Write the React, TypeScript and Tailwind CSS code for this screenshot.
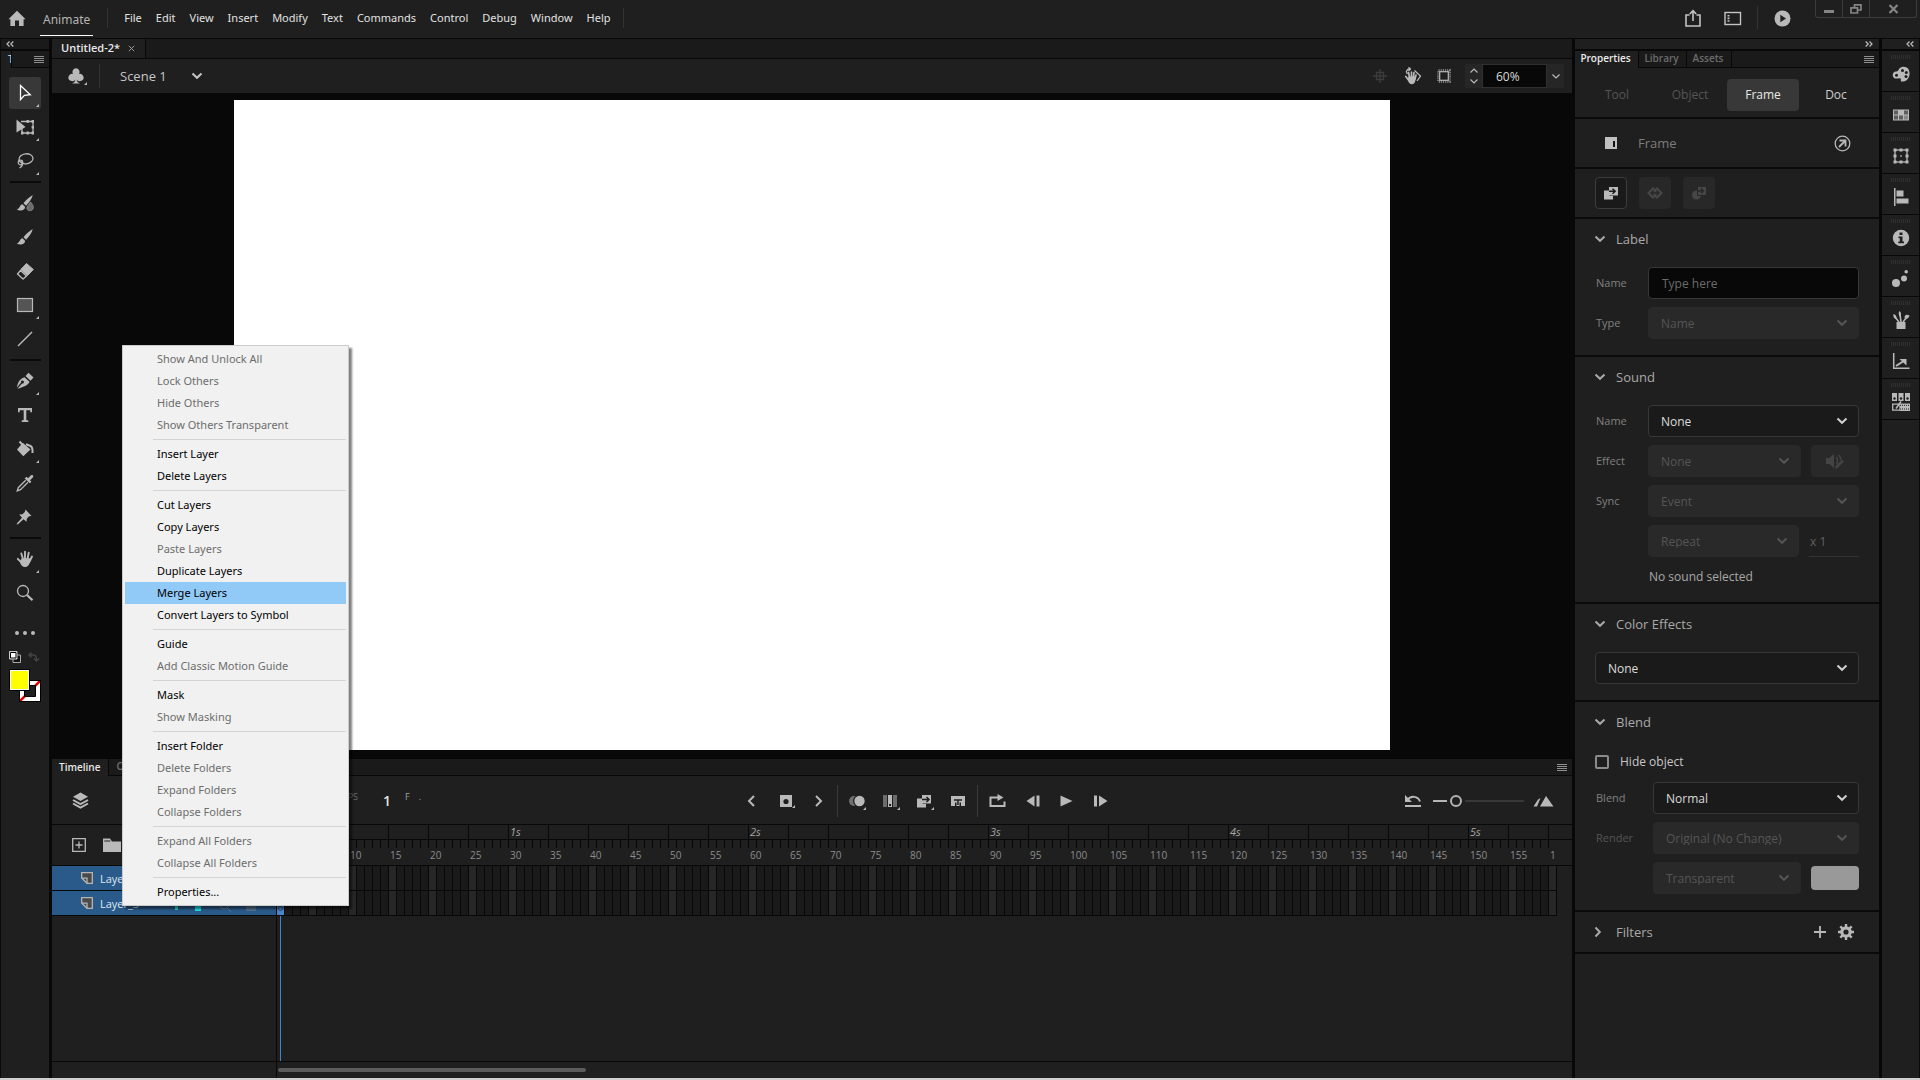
import React from "react";

const INK = "#b9b9b9";

type IconProps = { children: React.ReactNode; size?: number; w?: number; h?: number; className?: string };

function Icon({ children, size = 18, w, h, className = "" }: IconProps) {
  const width = w ?? size;
  const height = h ?? size;
  return (
    <svg width={width} height={height} viewBox={`0 0 ${width} ${height}`} fill="none" className={`shrink-0 ${className}`} aria-hidden="true">
      {children}
    </svg>
  );
}

function Corner() {
  return <span className="absolute right-[2px] bottom-[2px] size-[3px] bg-[#b9b9b9] [clip-path:polygon(100%_0,100%_100%,0_100%)]" />;
}

function ChevronDown({ className = "" }: { className?: string }) {
  return (
    <Icon w={12} h={8} className={className}>
      <path d="M1.500 1.500L6 5.800L10.500 1.500" stroke="currentColor" strokeWidth="2" />
    </Icon>
  );
}

function Burger() {
  return (
    <Icon w={10} h={9}>
      <path d="M0 1.500h10M0 3.500h10M0 5.500h10M0 7.500h10" stroke="#8f8f8f" />
    </Icon>
  );
}

function DoubleArrow({ right = false }: { right?: boolean }) {
  return (
    <Icon w={8} h={6} className={right ? "rotate-180" : ""}>
      <path d="M3.500 .5L1 3l2.500 2.500M7.300 .5L4.800 3l2.500 2.500" stroke="#c0c0c0" strokeWidth="1.200" />
    </Icon>
  );
}

/* ---------- top bar ---------- */

const menus = ["File", "Edit", "View", "Insert", "Modify", "Text", "Commands", "Control", "Debug", "Window", "Help"];

function TopBar() {
  return (
    <header className="flex h-[38px] shrink-0 items-start bg-[#1f1f1f]">
      <button aria-label="Home" className="mt-[10px] ml-2">
        <Icon w={18} h={17}>
          <path d="M9 .8L17.600 9.200H15.600V16H11V10.500H7V16H2.400V9.200H.4z" fill={INK} />
        </Icon>
      </button>
      <button className="mt-2 ml-[14px] h-7 border-b border-white px-[3px] pb-1 font-['Noto_Sans'] text-[12px] text-[#b4b4b4]">Animate</button>
      <span className="mt-2 ml-[14px] h-5 w-px bg-[#333]" />
      <nav className="mt-[7px] ml-4 flex h-5 items-center gap-[14px] font-['Noto_Sans']">
        {menus.map((m) => (
          <button key={m} className="text-[11px] text-[#e2e2e2]">{m}</button>
        ))}
      </nav>
      <span className="mt-2 ml-3 h-5 w-px bg-[#333]" />
      <div className="ml-auto flex items-start">
        <button aria-label="Share" className="mt-[9px]">
          <Icon w={18} h={18}>
            <path d="M5.500 6H2v11h14V6h-3.500M9 12V2M5.800 5L9 1.700L12.200 5" stroke="#c4c4c4" strokeWidth="1.600" />
          </Icon>
        </button>
        <button aria-label="Workspaces" className="mt-[11px] ml-[22px]">
          <Icon w={18} h={15}>
            <rect x="1" y="1.500" width="15.500" height="12" stroke="#c4c4c4" strokeWidth="1.400" />
            <path d="M4.500 4v7" stroke="#c4c4c4" strokeWidth="2" strokeDasharray="1.600 1" />
          </Icon>
        </button>
        <span className="mt-[6px] ml-[15px] h-[23px] w-px bg-[#333]" />
        <button aria-label="Test movie" className="mt-[10px] ml-4">
          <Icon w={17} h={17}>
            <circle cx="8.500" cy="8.500" r="8" fill={INK} />
            <path d="M6.300 4.800L12 8.500L6.300 12.200z" fill="#1f1f1f" />
          </Icon>
        </button>
        <div className="mr-[3px] ml-6 flex h-[18px] divide-x divide-[#3c3c3c] rounded-b-[3px] border-x border-b border-[#3c3c3c]">
          <button aria-label="Minimize" className="flex w-[27px] items-center justify-center pt-[6px]"><span className="h-[3px] w-[10px] bg-[#858585]" /></button>
          <button aria-label="Restore" className="flex w-[27px] items-center justify-center">
            <Icon w={12} h={10}><path d="M4.500 3V.8H11V6H8M1 3.800h6.500V9H1z" stroke="#858585" strokeWidth="1.700" /></Icon>
          </button>
          <button aria-label="Close" className="flex w-[46px] items-center justify-center">
            <Icon w={11} h={10}><path d="M1.500 1L9.500 9M9.500 1L1.500 9" stroke="#858585" strokeWidth="2.200" /></Icon>
          </button>
        </div>
      </div>
    </header>
  );
}

/* ---------- tool column ---------- */

const brush = (
  <>
    <path d="M16.800 1C13.500 3 9.500 6.500 7.500 9.200L10 11.700C12.600 9.300 15.800 5 16.800 1z" fill={INK} />
    <path d="M6.500 10.200C4.200 10.200 4.200 13.800 .8 15.800C4.500 17.500 9.300 16.300 9 12.700z" fill={INK} />
  </>
);

type Tool = { name: string; corner?: boolean; active?: boolean; art: React.ReactNode };

const toolGroups: Tool[][] = [
  [
    { name: "Selection", corner: true, active: true, art: <path d="M4.500 1.500V15.500L8.500 11.300L14.300 10.700z" stroke="#fff" strokeWidth="1.300" strokeLinejoin="miter" /> },
    {
      name: "Free transform",
      corner: true,
      art: (
        <>
          <path d="M5 3.500H17V15H6V9" stroke={INK} strokeWidth="1.300" />
          <path d="M.5 1.500L9.500 9L.5 14.500z" fill={INK} />
          <path d="M10.500 2h2.400v2.800h-2.400zM15.600 2h2.400v2.800h-2.400zM15.600 8h2.400v2.500h-2.400zM15.600 13.600h2.400v2.800h-2.400zM10.500 13.600h2.400v2.800h-2.400zM5 13.600h2.400v2.800H5z" fill={INK} />
        </>
      ),
    },
    {
      name: "Lasso",
      corner: true,
      art: (
        <>
          <ellipse cx="10" cy="6.800" rx="7" ry="5" stroke={INK} strokeWidth="1.300" transform="rotate(-6 10 6.800)" />
          <circle cx="4.500" cy="10.500" r="2.300" stroke={INK} strokeWidth="1.200" />
          <path d="M5 9.500C7.500 11.500 7 14 3.500 16" stroke={INK} strokeWidth="1.200" />
        </>
      ),
    },
  ],
  [
    { name: "Fluid brush", art: <>{brush}<path d="M14.500 8C17 11 18 12.500 17 15C16 17.300 11.500 17.300 10.800 14.500C10.600 12.500 12.500 11 14.500 8z" fill="#6b6b6b" stroke="#8c8c8c" strokeWidth=".8" /></> },
    { name: "Classic brush", art: brush },
    {
      name: "Eraser",
      art: (
        <>
          <path d="M10.500 1.500L17.300 7.500L11.500 13.500L4.800 7.500z" fill={INK} stroke={INK} strokeLinejoin="round" />
          <path d="M4.500 8.500L10.500 14L7 17L1.500 12z" stroke={INK} strokeWidth="1.400" strokeLinejoin="round" />
        </>
      ),
    },
    { name: "Rectangle", corner: true, art: <rect x="1.500" y="2.500" width="15" height="13" fill="#555" stroke={INK} strokeWidth="1.200" /> },
    { name: "Line", art: <path d="M2 16L16 2" stroke={INK} strokeWidth="1.500" /> },
  ],
  [
    {
      name: "Pen",
      corner: true,
      art: (
        <>
          <path d="M8.500 5.200L13.500 9.800C12.500 12.500 9.500 14.500 1.500 16.800L6 11.500A1.500 1.500 0 1 0 5 10.500L.8 15.800C2 9 4.500 6.500 8.500 5.200z" fill={INK} />
          <path d="M9.500 4L12.500 .8L17.500 5.500L14.500 8.800z" fill={INK} />
        </>
      ),
    },
    { name: "Text", art: <path d="M2 2H16V6.200H14.300V4.200H10.300V14.300H12.300V16H5.700V14.300H7.700V4.200H3.700V6.200H2z" fill={INK} /> },
    {
      name: "Paint bucket",
      corner: true,
      art: (
        <>
          <path d="M6.800 2.800L14.500 9.500L7.300 16.200L1 9.500z" fill={INK} />
          <path d="M3.500 1.500L8.500 7M10 4.200L14.500 6C16.500 7 16.800 9 16.500 13" stroke={INK} strokeWidth="2" />
        </>
      ),
    },
    {
      name: "Eyedropper",
      art: (
        <>
          <path d="M10.500 2.800L12 4.200L14.800 1.400C17 .3 18 2 16.800 3.500L14 6.300L15.400 7.800L13.800 9.300L8.700 4.400z" fill={INK} />
          <path d="M9.700 6.200L2.300 13.700L1.200 16.900L4.500 15.700L12 8.200" stroke={INK} strokeWidth="1.300" />
        </>
      ),
    },
    { name: "Asset warp", art: <path d="M9.500 1.500L15.500 8L13 8.300L10.800 10.800L10.500 13.800L7.500 11.200L2 16.300L.8 16.500L1 15.200L6 9.800L3.200 6.500L6.500 6.300L8.800 4z" fill={INK} /> },
  ],
  [
    {
      name: "Hand",
      corner: true,
      art: (
        <>
          <path d="M5.300 3.500L7 9M9 1.800V8.500M12.700 2.800L11.500 9M16 6.500L13.500 11.500M1.800 8.800L5.500 12.500" stroke={INK} strokeWidth="1.900" strokeLinecap="round" />
          <path d="M5.500 8.500L13.500 8L14.500 10.500C13.500 14.500 12 17 9 17C6.500 17 5 15.500 3.800 12z" fill={INK} />
        </>
      ),
    },
    {
      name: "Zoom",
      art: (
        <>
          <circle cx="7" cy="7" r="5.500" stroke={INK} strokeWidth="1.300" />
          <path d="M11 11L16.500 16.300" stroke={INK} strokeWidth="2.200" />
        </>
      ),
    },
  ],
];

function ToolColumn() {
  return (
    <aside className="flex w-[49px] shrink-0 flex-col border-l border-[#0c0c0c] bg-[#1f1f1f]">
      <div className="flex h-[10px] shrink-0 items-center bg-[#1a1a1a] pl-[5px]"><DoubleArrow /></div>
      <div className="flex h-[19px] shrink-0 border-t-2 border-[#080808]">
        <span className="w-[10px] overflow-hidden pl-[7px] text-[10px] leading-4 text-[#dbe7ff]">T</span>
        <span className="flex flex-1 items-center justify-end border-b border-l border-[#080808] bg-[#1a1a1a] pr-[5px]"><Burger /></span>
      </div>
      <div className="mt-[9px] flex flex-col items-center gap-[2px]">
        {toolGroups.map((group, i) => (
          <React.Fragment key={i}>
            {i > 0 && <div className="flex h-[6px] w-[31px] items-center"><span className="h-[2px] w-full bg-[#0a0a0a]" /></div>}
            {group.map((t) => (
              <button key={t.name} aria-label={t.name} className={`relative flex size-8 items-center justify-center rounded-[3px] ${t.active ? "bg-[#383838]" : ""}`}>
                <Icon>{t.art}</Icon>
                {t.corner && <Corner />}
              </button>
            ))}
          </React.Fragment>
        ))}
      </div>
      <button aria-label="Edit toolbar" className="mt-[22px] flex justify-center gap-[4px]">
        <span className="size-[4px] rounded-full bg-[#b9b9b9]" />
        <span className="size-[4px] rounded-full bg-[#b9b9b9]" />
        <span className="size-[4px] rounded-full bg-[#b9b9b9]" />
      </button>
      <div className="mt-4 flex h-3 items-start justify-between pr-[9px] pl-2">
        <Icon size={12}>
          <path d="M4 4h7.500v7.500H4z" fill="#111" stroke="#aaa" />
          <path d="M.5 .5h7.500v7.500H.5z" fill="#fff" stroke="#ccc" />
          <path d="M1.500 1.500h5.500v5.500H1.500z" fill="#fff" stroke="#000" />
        </Icon>
        <Icon size={12}><path d="M1 4H5.500C8 4 8.500 5.500 8.500 8.500M3.500 1.500L1 4l2.500 2.500M6 7.500L8.500 10l2.500-2.500" stroke="#444" strokeWidth="1.500" /></Icon>
      </div>
      <div className="mt-[6px] ml-2 grid w-8 grid-cols-[10px_11px_11px] grid-rows-[11px_11px_11px]">
        <button aria-label="Stroke color" className="col-start-2 col-end-4 row-start-2 row-end-4 border border-black">
          <svg viewBox="0 0 20 20" className="block size-5" aria-hidden="true">
            <path d="M0 0H20V20H0z" fill="#fff" />
            <path d="M0 20L20 0" stroke="#e00000" strokeWidth="2.500" />
            <path d="M4.500 4.500h11v11h-11z" fill="#1f1f1f" stroke="#000" />
          </svg>
        </button>
        <button aria-label="Fill color" className="z-10 col-start-1 col-end-3 row-start-1 row-end-3 border border-black bg-[#ffff00] outline outline-1 -outline-offset-2 outline-white" />
      </div>
    </aside>
  );
}

/* ---------- document ---------- */

function DocumentArea() {
  return (
    <section className="flex min-h-0 flex-1 flex-col">
      <div className="flex h-5 shrink-0 items-stretch border-b border-[#080808] bg-[#1a1a1a]">
        <div className="flex items-center gap-2 border-r border-[#080808] bg-[#1f1f1f] pr-[10px] pl-[9px]">
          <span className="pb-[2px] text-[11px] font-semibold text-[#e8e8e8]">Untitled-2*</span>
          <button aria-label="Close tab"><Icon w={7} h={7}><path d="M.8 .8L6.200 6.200M6.200 .8L.8 6.200" stroke="#999" /></Icon></button>
        </div>
      </div>
      <div className="flex h-[34px] shrink-0 items-center bg-[#1f1f1f]">
        <button aria-label="Edit symbols" className="relative ml-[15px] pr-[2px]">
          <Icon w={18} h={18}>
            <path d="M9 1.300a3.600 3.600 0 0 1 3 5.600a3.700 3.700 0 1 1-2.300 5.500c.200 2 1 3.200 3.300 4.100H5c2.300-.9 3.100-2.100 3.300-4.100A3.700 3.700 0 1 1 6 6.900A3.600 3.600 0 0 1 9 1.300z" fill={INK} />
          </Icon>
          <span className="absolute right-0 bottom-0 size-[3px] bg-[#b9b9b9] [clip-path:polygon(100%_0,100%_100%,0_100%)]" />
        </button>
        <span className="ml-[12px] h-6 w-px bg-[#333]" />
        <button className="ml-5 flex items-center gap-6 text-[13px] text-[#c6c6c6]">
          Scene 1
          <ChevronDown />
        </button>
        <div className="ml-auto flex items-center pr-2">
          <button aria-label="Center stage">
            <Icon size={14}><path d="M7 0V14M0 7H14M3.500 3.500h7v7h-7z" stroke="#3c3c3c" strokeWidth="1.300" /></Icon>
          </button>
          <button aria-label="Rotate stage" className="ml-[17px]">
            <Icon w={18} h={18}>
              <path d="M4.500 5.500L5.500 10M7.500 5V10M10 5.500L9.500 10M12 8L11 12M1.800 9.500L4.500 13" stroke={INK} strokeWidth="1.700" strokeLinecap="round" />
              <path d="M4.500 9.500L11.500 9.500C12 13 11 17.300 8 17.300C5.500 17.300 4 15 3.500 12z" fill={INK} />
              <path d="M3.500 7C1.500 5 2.500 2 6 2M4.500 .3L6.500 2L4.500 4M10.500 3.500L16.500 9L13 14" stroke={INK} strokeWidth="1.300" />
            </Icon>
          </button>
          <button aria-label="Clip content" className="ml-[15px]">
            <Icon size={14}>
              <rect x="1.500" y="1.500" width="11" height="11" stroke="#777" strokeWidth="3" strokeDasharray="1.200 .9" />
              <rect x="2.700" y="2.700" width="8.600" height="8.600" fill="#1f1f1f" stroke={INK} strokeWidth="1.200" />
            </Icon>
          </button>
          <div className="ml-[14px] flex h-6 w-[17px] flex-col items-center justify-between bg-[#262626] py-[4px]">
            <button aria-label="Zoom in"><Icon w={8} h={5} className="block"><path d="M.5 4.500L4 1l3.500 3.500" stroke={INK} strokeWidth="1.200" /></Icon></button>
            <button aria-label="Zoom out"><Icon w={8} h={5} className="block"><path d="M.5 .5L4 4L7.500 .5" stroke={INK} strokeWidth="1.200" /></Icon></button>
          </div>
          <input aria-label="Zoom level" defaultValue="60%" className="h-6 w-[65px] border border-[#303030] bg-[#080808] pl-[13px] text-[12px] text-[#d8d8d8]" />
          <button aria-label="Zoom presets" className="flex h-6 w-[17px] items-center justify-center bg-[#262626]">
            <Icon w={8} h={5}><path d="M.5 .5L4 4L7.500 .5" stroke={INK} strokeWidth="1.200" /></Icon>
          </button>
        </div>
      </div>
      <div className="flex min-h-0 flex-1 bg-[#080808] pt-[7px] pr-[182px] pb-[9px] pl-[182px]">
        <div className="flex-1 bg-white" />
      </div>
    </section>
  );
}

/* ---------- timeline ---------- */

const FRAME_COUNT = 160;

function TimelineToolbar() {
  return (
    <div className="grid h-[49px] shrink-0 grid-cols-[3fr_auto_2fr] items-center border-b border-[#080808] bg-[#1f1f1f] pt-px">
      <div className="flex items-center">
        <button aria-label="Layers" className="ml-5">
          <Icon w={17} h={17}>
            <path d="M8.500 .5L16 4.700L8.500 8.900L1 4.700z" fill={INK} />
            <path d="M1 8L8.500 12.200L16 8M1 11.500L8.500 15.700L16 11.500" stroke={INK} strokeWidth="2" />
          </Icon>
        </button>
        <span className="ml-[254px] pb-2 text-[9px] text-[#6a6a6a]">FPS</span>
        <span className="ml-[25px] text-[14px] font-semibold text-[#e4e4e4]">1</span>
        <span className="ml-[14px] pb-2 text-[9px] text-[#a0a0a0]">F</span>
        <span className="ml-[9px] pb-2 text-[9px] text-[#a0a0a0]">.</span>
      </div>
      <div className="flex items-center">
        <button aria-label="Previous keyframe"><Icon w={8} h={12}><path d="M7 1L2 6l5 5" stroke={INK} strokeWidth="2" /></Icon></button>
        <button aria-label="Insert keyframe" className="relative ml-[24px]">
          <Icon w={16} h={14}><path d="M1 1h12v12H1z" fill={INK} /><circle cx="7" cy="7.500" r="2.600" fill="#1f1f1f" /><path d="M16 11v3h-3z" fill={INK} /></Icon>
        </button>
        <button aria-label="Next keyframe" className="ml-[20px]"><Icon w={8} h={12}><path d="M1 1l5 5l-5 5" stroke={INK} strokeWidth="2" /></Icon></button>
        <span className="ml-[14px] h-8 w-px bg-[#3a3a3a]" />
        <button aria-label="Onion skin" className="ml-[10px]">
          <Icon w={18} h={18}><circle cx="6" cy="9" r="5" fill="#707070" /><circle cx="11" cy="9" r="6" fill="#1f1f1f" /><circle cx="11.500" cy="9" r="5.200" fill={INK} /><path d="M18 15v3h-3z" fill={INK} /></Icon>
        </button>
        <button aria-label="Edit multiple frames" className="ml-4">
          <Icon w={18} h={18}><path d="M1 3h4v12H1zM11 3h4v12h-4z" fill="#6c6c6c" /><path d="M6 3h4v12H6z" fill={INK} /><path d="M7 12h2v2H7z" fill="#1f1f1f" /><path d="M18 15v3h-3z" fill={INK} /></Icon>
        </button>
        <button aria-label="Insert classic tween" className="ml-4">
          <Icon w={18} h={18}><path d="M5.500 2.500H15.500V12H5.500z" fill={INK} stroke="#1f1f1f" /><path d="M1 6.500h5.500v5.500H10v3.500H1z" fill={INK} /><path d="M6 7.500h7M10.500 5l2.500 2.500L10.500 10" stroke="#1f1f1f" strokeWidth="1.500" /><path d="M18 15v3h-3z" fill={INK} /></Icon>
        </button>
        <button aria-label="Frame span" className="ml-4">
          <Icon w={16} h={14}><path d="M1 2h14v10H11V8.500H9.500V12H6.500V8.500H5V12H1z" fill={INK} /><path d="M4 6h8M8 6v5" stroke="#1f1f1f" strokeWidth="1.500" /></Icon>
        </button>
        <span className="ml-[11px] h-8 w-px bg-[#3a3a3a]" />
        <button aria-label="Loop" className="ml-[11px]">
          <Icon w={17} h={14}><path d="M8 3.500H1.500V12H15.500V7.500M1.500 3.500H11" stroke={INK} strokeWidth="2" /><path d="M8.500 0L14.500 3.500L8.500 7z" fill={INK} /></Icon>
        </button>
        <button aria-label="Step back" className="ml-[20px]"><Icon w={15} h={12}><path d="M8.500 .5V11.500L.5 6zM10.500 .5h3v11h-3z" fill={INK} /></Icon></button>
        <button aria-label="Play" className="ml-[19px]"><Icon w={13} h={12}><path d="M.5 .5L12.500 6L.5 11.500z" fill={INK} /></Icon></button>
        <button aria-label="Step forward" className="ml-[20px]"><Icon w={15} h={12}><path d="M1 .5h3v11H1zM6 .5L14.500 6L6 11.500z" fill={INK} /></Icon></button>
      </div>
      <div className="flex items-center justify-end pr-[18px]">
        <button aria-label="Reset timeline zoom">
          <Icon w={18} h={14}><path d="M3 6.500C7 1 14 2 16 7.500" stroke={INK} strokeWidth="2" /><path d="M1 1v7h7z" fill={INK} /><path d="M1 12h16" stroke={INK} strokeWidth="2" /></Icon>
        </button>
        <input
          type="range"
          aria-label="Timeline zoom"
          defaultValue="22"
          className="ml-[11px] h-3 w-[91px] appearance-none bg-[linear-gradient(to_right,#b4b4b4_14px,transparent_14px,transparent_32px,#383838_32px)] bg-[length:100%_2px] bg-center bg-no-repeat [&::-webkit-slider-thumb]:size-3 [&::-webkit-slider-thumb]:appearance-none [&::-webkit-slider-thumb]:rounded-full [&::-webkit-slider-thumb]:border-2 [&::-webkit-slider-thumb]:border-solid [&::-webkit-slider-thumb]:border-[#b4b4b4] [&::-webkit-slider-thumb]:bg-[#1f1f1f]"
        />
        <button aria-label="Resize timeline view" className="ml-[9px]">
          <Icon w={21} h={12}><path d="M7 11.500L13 1L20.500 11.500zM.5 11.500L5 4.500L7.500 3L4 11.500z" fill={INK} /></Icon>
        </button>
      </div>
    </div>
  );
}

function Ruler() {
  const marks = Array.from({ length: FRAME_COUNT / 5 }, (_, i) => (i + 1) * 5);
  return (
    <div className="flex h-[41px] shrink-0 border-b border-[#080808]">
      <div className="flex w-8 shrink-0 flex-col">
        <span className="h-[15px] border-b border-[#080808]" />
        <span className="h-[8px] bg-[repeating-linear-gradient(to_right,transparent_0_7px,#080808_7px_8px)]" />
      </div>
      {marks.map((n) => {
        const last = n === FRAME_COUNT;
        return (
          <div key={n} className={`-ml-px flex flex-col text-[10px] text-[#8c8c8c] ${last ? "min-w-0 flex-1" : "w-[41px] shrink-0"}`}>
            <span className="h-[15px] border-b border-l border-[#080808] pl-px text-[11px] leading-[14px] text-[#a4a4a4] italic">
              {n % 30 === 0 ? `${n / 30}s` : ""}
            </span>
            <span className={`h-[8px] ${last ? "border-l border-[#080808]" : "bg-[repeating-linear-gradient(to_right,#080808_0_1px,transparent_1px_8px)]"}`} />
            <span className="pl-[2px] leading-[15px]">{last ? "1" : n}</span>
          </div>
        );
      })}
    </div>
  );
}

function FrameRow() {
  return (
    <div className="flex h-[25px] shrink-0 self-start border-b border-[#080808]">
      {Array.from({ length: FRAME_COUNT }, (_, i) => i + 1).map((n) => (
        <button
          key={n}
          aria-label={`Frame ${n}`}
          className={`flex w-2 shrink-0 items-end justify-center border-r border-[#080808] ${n === 1 ? "bg-[#4a86c5]" : n % 5 === 0 ? "bg-[#272727]" : "bg-[#1a1a1a]"}`}
        >
          {n === 1 && <span className="mb-1 size-[5px] rounded-full border border-[#1f4b7a]" />}
        </button>
      ))}
    </div>
  );
}

function LayerRow({ name }: { name: string }) {
  return (
    <div className="flex h-[25px] shrink-0 items-center border-b border-[#080808] bg-[#2a5a8a] pl-[29px] text-[11px] text-[#dfe8f0]">
      <Icon w={12} h={12}><path d="M.7 .7H11.300V11.300H6L.7 6z" fill="#4a4a4a" stroke="#b5b5b5" strokeWidth="1.300" /><path d="M.7 6.200H6V11.300" stroke="#b5b5b5" strokeWidth="1.300" /></Icon>
      <span className="ml-[7px] w-[75px]">{name}</span>
      <span className="mt-[7px] h-[6px] w-[3px] bg-[#27d9c4]" />
      <span className="mt-[9px] ml-[17px] h-[7px] w-[6px] bg-[#1fe0e8]" />
      <Icon w={12} h={12} className="mt-[5px] ml-[18px]"><circle cx="5" cy="5" r="4" stroke="#6c7f92" /><path d="M8 8l3.500 3.500" stroke="#6c7f92" /></Icon>
      <span className="mt-[7px] ml-[15px] h-[8px] w-[10px] bg-[#51718f]" />
    </div>
  );
}

function Timeline() {
  return (
    <section className="flex h-[319px] shrink-0 flex-col bg-[#1f1f1f] text-[#e8e8e8]">
      <div className="flex h-[17px] shrink-0 items-stretch border-b border-[#080808] bg-[#1a1a1a]">
        <button className="-mb-px border-r border-[#080808] bg-[#1f1f1f] pr-2 pb-[2px] pl-[7px] text-[10px] leading-[14px] font-semibold text-[#e8e8e8]">Timeline</button>
        <button className="px-[7px] pb-[2px] text-[10px] leading-[14px] font-semibold text-[#707070]">Output</button>
        <button aria-label="Timeline panel menu" className="mr-[5px] ml-auto"><Burger /></button>
      </div>
      <TimelineToolbar />
      <div className="flex min-h-0 flex-1">
        <div className="flex w-[225px] shrink-0 flex-col border-r border-[#080808]">
          <div className="flex h-[41px] shrink-0 items-center gap-[17px] border-b border-[#080808] pl-5">
            <button aria-label="New layer"><Icon size={14}><path d="M.7 .7h12.600v12.600H.7zM7 3.500v7M3.500 7h7" stroke={INK} strokeWidth="1.300" /></Icon></button>
            <button aria-label="New folder"><Icon w={18} h={14}><path d="M0 .5h7l2 3h9V14H0z" fill={INK} /><path d="M1.300 3h6" stroke="#1f1f1f" /></Icon></button>
          </div>
          <LayerRow name="Layer_3" />
          <LayerRow name="Layer_3" />
          <div className="flex-1" />
          <div className="h-[17px] shrink-0 border-t border-[#080808]" />
        </div>
        <div className="flex min-w-0 flex-1 flex-col">
          <Ruler />
          <FrameRow />
          <FrameRow />
          <div className="ml-[3px] w-px flex-1 bg-[#3f85cc]" />
          <div className="flex h-[17px] shrink-0 items-center border-t border-[#080808] pl-px">
            <span className="h-1 w-[308px] rounded-full bg-[#5c5c5c]" />
          </div>
        </div>
      </div>
    </section>
  );
}

/* ---------- properties ---------- */

type SelectProps = { id: string; value: string; disabled?: boolean; className?: string };

function Select({ id, value, disabled, className = "" }: SelectProps) {
  return (
    <div className={`relative h-8 ${className}`}>
      <select
        id={id}
        aria-label={id}
        disabled={disabled}
        className={`h-8 w-full appearance-none rounded-[4px] border pt-px pl-3 text-[12px] opacity-100 ${disabled ? "border-[#292929] bg-[#292929] text-[#555]" : "border-[#373737] bg-[#1a1a1a] text-[#dcdcdc]"}`}
      >
        <option>{value}</option>
      </select>
      <ChevronDown className={`pointer-events-none absolute top-3 right-[11px] ${disabled ? "text-[#555]" : "text-[#d0d0d0]"}`} />
    </div>
  );
}

function Section({ title, open = true, children, actions }: { title: string; open?: boolean; children?: React.ReactNode; actions?: React.ReactNode }) {
  return (
    <section className="border-b-2 border-[#0a0a0a] pr-5 pl-5">
      <div className="flex h-10 items-center">
        <button aria-expanded={open} className="flex items-center gap-[10px] text-[13px] font-medium text-[#a9a9a9]">
          <ChevronDown className={`-ml-px ${open ? "" : "-translate-x-[2px] -rotate-90"}`} />
          {title}
        </button>
        {actions}
      </div>
      {children}
    </section>
  );
}

function Row({ label, htmlFor, dim, wide, children }: { label?: string; htmlFor?: string; dim?: boolean; wide?: boolean; children: React.ReactNode }) {
  return (
    <div className="flex items-center">
      <label htmlFor={htmlFor} className={`shrink-0 pb-[2px] pl-px text-[11px] ${wide ? "w-[58px]" : "w-[53px]"} ${dim ? "text-[#555]" : "text-[#808080]"}`}>{label}</label>
      {children}
    </div>
  );
}

function Properties() {
  return (
    <aside className="flex w-[304px] shrink-0 flex-col bg-[#1f1f1f]">
      <div className="flex h-[10px] shrink-0 items-center justify-end pr-[6px]"><DoubleArrow right /></div>
      <div className="flex h-[19px] shrink-0 border-t-2 border-b border-[#080808] bg-[#1a1a1a] text-[10px] font-semibold text-[#6c6c6c]">
        <button className="-mb-px w-16 shrink-0 border-r border-[#080808] bg-[#1f1f1f] pr-[2px] pb-[3px] text-[#ececec]">Properties</button>
        <button className="w-12 shrink-0 border-r border-[#080808] pr-[2px] pb-[2px]">Library</button>
        <button className="w-[45px] shrink-0 border-r border-[#080808] pr-[2px] pb-[2px]">Assets</button>
        <button aria-label="Panel menu" className="mr-[5px] ml-auto"><Burger /></button>
      </div>
      <div className="flex h-[51px] shrink-0 items-center justify-between border-b-2 border-[#0a0a0a] pt-[5px] pr-[7px] pl-[6px] text-[12px] text-[#555]">
        <button className="h-8 w-[72px]">Tool</button>
        <button className="h-8 w-[72px]">Object</button>
        <button className="h-8 w-[72px] rounded-[4px] bg-[#383838] font-medium text-[#e8e8e8]">Frame</button>
        <button className="h-8 w-[72px] font-medium text-[#cfcfcf]">Doc</button>
      </div>
      <div className="flex h-[50px] shrink-0 items-center border-b-2 border-[#0a0a0a] pr-7 pl-[30px]">
        <Icon size={12}><path d="M0 0h12v12H0z" fill="#c0c0c0" /><path d="M8 4h2v6H8z" fill="#111" /></Icon>
        <span className="ml-[21px] text-[13px] text-[#7c7c7c]">Frame</span>
        <button aria-label="Frame actions" className="ml-auto">
          <Icon size={17}><circle cx="8.500" cy="8.500" r="7.300" stroke={INK} strokeWidth="1.300" /><path d="M5 12L11 6M5.500 5.500H11.500V11.500" stroke={INK} strokeWidth="1.800" /></Icon>
        </button>
      </div>
      <div className="flex h-[50px] shrink-0 items-center gap-3 border-b-2 border-[#0a0a0a] pl-5">
        <button aria-label="Classic tween" className="flex size-8 items-center justify-center rounded-[4px] border border-[#3c3c3c] bg-[#1a1a1a]">
          <Icon size={16}><path d="M5.500 1.500H15.500V11H5.500z" fill={INK} stroke="#1a1a1a" /><path d="M1 5.500h5.500v5.500H10v3.500H1z" fill={INK} /><path d="M6 6.300h6M9.500 3.800L12.200 6.300L9.500 8.800" stroke="#1a1a1a" strokeWidth="1.500" /></Icon>
        </button>
        <button aria-label="Motion tween" className="flex size-8 items-center justify-center rounded-[4px] bg-[#282828]">
          <Icon size={16}><path d="M6 2L0 8l6 6l2-2l2 2l6-6l-6-6l-2 2z" fill="#464646" /><path d="M4 8h8M9.500 5.500L12 8l-2.500 2.500M6.500 5.500L4 8l2.500 2.500" stroke="#282828" strokeWidth="1.300" /></Icon>
        </button>
        <button aria-label="Shape tween" className="flex size-8 items-center justify-center rounded-[4px] bg-[#282828]">
          <Icon size={16}><circle cx="5.500" cy="10" r="4.500" fill="#464646" /><path d="M6.500 1.500H15.500V10.500H6.500z" fill="#464646" stroke="#282828" /><path d="M6 6h6.500M10 3.700L12.500 6L10 8.300" stroke="#282828" strokeWidth="1.400" /></Icon>
        </button>
      </div>

      <Section title="Label">
        <div className="mt-2 flex flex-col gap-2 pb-4">
          <Row label="Name" htmlFor="label-name">
            <input id="label-name" placeholder="Type here" className="h-8 min-w-0 flex-1 rounded-[4px] border border-[#373737] bg-[#080808] pl-[13px] text-[12px] text-[#ddd] placeholder:text-[#6b6b6b]" />
          </Row>
          <Row label="Type" htmlFor="label-type"><Select id="label-type" value="Name" disabled className="flex-1" /></Row>
        </div>
      </Section>

      <Section title="Sound">
        <div className="mt-2 flex flex-col gap-2 pb-[13px]">
          <Row label="Name" htmlFor="sound-name"><Select id="sound-name" value="None" className="flex-1" /></Row>
          <Row label="Effect" htmlFor="sound-effect">
            <Select id="sound-effect" value="None" disabled className="flex-1" />
            <button aria-label="Edit sound envelope" className="ml-[10px] flex h-8 w-12 items-center justify-center rounded-[4px] bg-[#292929]">
              <Icon w={18} h={16}><path d="M0 5h3.500L8 .8V15L3.500 11H0z" fill="#444" /><path d="M10 4C12 5.500 12 9 10.500 11M12.500 2C14.500 3.500 15 5.500 14.500 7" stroke="#444" strokeWidth="1.500" /><path d="M16 6.500L18 8.500L11.500 15L9 15.800L9.800 13z" fill="#444" /></Icon>
            </button>
          </Row>
          <Row label="Sync" htmlFor="sound-sync"><Select id="sound-sync" value="Event" disabled className="flex-1" /></Row>
          <Row htmlFor="sound-repeat">
            <Select id="sound-repeat" value="Repeat" disabled className="flex-1" />
            <input aria-label="Repeat count" defaultValue="x 1" className="ml-[10px] h-8 w-[50px] border-b border-[#333] pt-px pl-px text-[12px] text-[#606060]" />
          </Row>
          <p className="ml-[54px] flex h-6 items-center text-[12px] text-[#a9a9a9]">No sound selected</p>
        </div>
      </Section>

      <Section title="Color Effects">
        <div className="mt-2 pb-4"><Select id="color-effects" value="None" /></div>
      </Section>

      <Section title="Blend">
        <div className="mt-2 flex flex-col gap-2 pb-4">
          <label className="flex h-6 items-center gap-[11px] text-[12px] text-[#c8c8c8]">
            <input type="checkbox" className="size-[14px] appearance-none rounded-[2px] border-2 border-[#8b8b8b]" />
            Hide object
          </label>
          <Row label="Blend" htmlFor="blend-mode" wide><Select id="blend-mode" value="Normal" className="flex-1" /></Row>
          <Row label="Render" htmlFor="blend-render" wide dim><Select id="blend-render" value="Original (No Change)" disabled className="flex-1" /></Row>
          <Row htmlFor="blend-background" wide>
            <Select id="blend-background" value="Transparent" disabled className="flex-1" />
            <button aria-label="Background color" className="ml-[10px] h-6 w-12 rounded-[4px] bg-[#999]" />
          </Row>
        </div>
      </Section>

      <Section
        title="Filters"
        open={false}
        actions={
          <div className="mr-[5px] ml-auto flex items-center gap-3">
            <button aria-label="Add filter"><Icon size={12}><path d="M6 0v12M0 6h12" stroke={INK} strokeWidth="1.800" /></Icon></button>
            <button aria-label="Filter options">
              <Icon size={16}>
                <circle cx="8" cy="8" r="4.200" stroke={INK} strokeWidth="3.200" />
                <path d="M8 0v3M8 13v3M0 8h3M13 8h3M2.300 2.300l2 2M11.700 11.700l2 2M2.300 13.700l2-2M11.700 4.300l2-2" stroke={INK} strokeWidth="2.400" />
              </Icon>
            </button>
          </div>
        }
      />
    </aside>
  );
}

/* ---------- collapsed dock ---------- */

const dockItems: { name: string; art: React.ReactNode }[] = [
  {
    name: "Color",
    art: (
      <>
        <path d="M10 2C15 1 18 4.500 17.500 9.500C17 14 14 17 9.500 16.500C8 16.200 9.500 14.500 8.500 13.500C7 12.500 4.500 14.500 2 13C-.5 10.500 1 6.500 4 6.500C7 7 6 2.800 10 2z" fill={INK} />
        <circle cx="10.500" cy="5.500" r="1.500" fill="#1f1f1f" /><circle cx="14.300" cy="7.500" r="1.500" fill="#1f1f1f" /><circle cx="14" cy="11.500" r="1.500" fill="#1f1f1f" /><circle cx="4.500" cy="10.300" r="1.500" fill="#1f1f1f" />
      </>
    ),
  },
  {
    name: "Swatches",
    art: (
      <>
        <path d="M1 3.500h16v11H1z" fill={INK} />
        <path d="M2 4.500h4v4H2zM2 9.500h4v4H2zM7 9.500h4v4H7zM12 4.500h4v4h-4z" fill="#5e5e5e" /><path d="M12 9.500h4v4h-4z" fill="#858585" />
      </>
    ),
  },
  {
    name: "Transform",
    art: (
      <>
        <rect x="3" y="3" width="12" height="12" stroke={INK} strokeWidth="1.300" />
        <path d="M1.500 1.500h3v3h-3zM7.500 1.500h3v3h-3zM13.500 1.500h3v3h-3zM1.500 7.500h3v3h-3zM13.500 7.500h3v3h-3zM1.500 13.500h3v3h-3zM7.500 13.500h3v3h-3zM13.500 13.500h3v3h-3zM8.200 8.200h1.600v1.600H8.200z" fill={INK} />
      </>
    ),
  },
  { name: "Align", art: <path d="M2 0h1.500v18H2zM4.500 2.500h7v6h-7zM4.500 10.500h12v5h-12z" fill={INK} /> },
  {
    name: "Info",
    art: (
      <>
        <circle cx="9" cy="9" r="8.200" fill={INK} />
        <path d="M7.500 3.500h3v2.500h-3zM6.500 7.500h4v5h1.500v1.800H6.300v-1.800h1.500V9.200H6.500z" fill="#1f1f1f" />
      </>
    ),
  },
  { name: "Particles", art: <><circle cx="4" cy="13" r="4" fill={INK} /><circle cx="12" cy="8.500" r="3" fill={INK} /><circle cx="14.200" cy="1.800" r="1.800" fill={INK} /></> },
  {
    name: "Brush library",
    art: (
      <>
        <path d="M4.500 11h9v7h-9z" fill={INK} />
        <path d="M7 11L3 6M9 11L8 3M11 11L14.500 6.500" stroke={INK} strokeWidth="1.600" />
        <path d="M1.500 3C4 3.500 4.800 5.500 4.500 8C2 8 1 5.500 1.500 3zM7.500 0C9.500 1.500 9.500 4 8 6C6.300 4 6.300 1.500 7.500 0zM12.500 5.500C13.500 3.500 15.500 3.500 17.500 4.500C17 7 15 8.500 13 8z" fill={INK} />
      </>
    ),
  },
  { name: "Motion editor", art: <><path d="M1.700 1V16.300H17.500" stroke={INK} strokeWidth="1.500" /><path d="M4 14L11 9.500" stroke={INK} strokeWidth="2" /><path d="M7.500 7H14.500V13.500z" fill={INK} /></> },
  {
    name: "Frame picker",
    art: (
      <>
        <path d="M0 0h5v8H0zM6.500 0h5v8h-5zM13 0h5v8h-5z" fill={INK} />
        <circle cx="2.500" cy="5.500" r="1.200" fill="#1f1f1f" /><circle cx="9" cy="5.500" r="1.200" fill="#1f1f1f" /><circle cx="15.500" cy="5.500" r="1.200" fill="#1f1f1f" />
        <path d="M.7 11.200H8v6H.7z" stroke={INK} strokeWidth="1.300" /><path d="M8 10.500h10v7.500H8z" fill={INK} />
        <path d="M8 12.300h10M8 16h10" stroke="#1f1f1f" strokeDasharray="1 1" /><path d="M4 15.500L9 8.500" stroke={INK} strokeWidth="1.500" />
      </>
    ),
  },
];

function Dock() {
  return (
    <aside className="flex w-[38px] shrink-0 flex-col border-r border-[#0a0a0a] bg-[#1f1f1f]">
      <div className="flex h-[10px] shrink-0 items-center justify-end pr-[5px]"><DoubleArrow /></div>
      <div className="h-[2px] shrink-0 bg-[#080808]" />
      {dockItems.map((d) => (
        <button key={d.name} aria-label={d.name} className="flex h-[41px] shrink-0 flex-col items-center border-b border-[#080808] pt-1">
          <span className="h-[4px] w-[20px] bg-[repeating-linear-gradient(to_right,#303030_0_1px,transparent_1px_2px)]" />
          <Icon className="mt-[6px]">{d.art}</Icon>
        </button>
      ))}
    </aside>
  );
}

/* ---------- context menu ---------- */

const menuGroups: { text: string; off?: boolean }[][] = [
  [{ text: "Show And Unlock All", off: true }, { text: "Lock Others", off: true }, { text: "Hide Others", off: true }, { text: "Show Others Transparent", off: true }],
  [{ text: "Insert Layer" }, { text: "Delete Layers" }],
  [{ text: "Cut Layers" }, { text: "Copy Layers" }, { text: "Paste Layers", off: true }, { text: "Duplicate Layers" }, { text: "Merge Layers" }, { text: "Convert Layers to Symbol" }],
  [{ text: "Guide" }, { text: "Add Classic Motion Guide", off: true }],
  [{ text: "Mask" }, { text: "Show Masking", off: true }],
  [{ text: "Insert Folder" }, { text: "Delete Folders", off: true }, { text: "Expand Folders", off: true }, { text: "Collapse Folders", off: true }],
  [{ text: "Expand All Folders", off: true }, { text: "Collapse All Folders", off: true }],
  [{ text: "Properties..." }],
];

function ContextMenu() {
  return (
    <div role="menu" className="absolute top-[345px] left-[122px] z-20 flex w-[227px] flex-col border border-[#ccc] bg-[#f1f1f1] p-[2px] font-['Noto_Sans'] shadow-[3px_3px_2px_rgba(0,0,0,0.5)]">
      {menuGroups.map((g, i) => (
        <React.Fragment key={i}>
          {i > 0 && <div role="separator" className="my-[3px] ml-7 h-px bg-[#d4d4d4]" />}
          {g.map((item) => (
            <button
              key={item.text}
              role="menuitem"
              disabled={item.off}
              className={`h-[22px] pb-[2px] pl-8 text-left text-[11px] ${item.off ? "text-[#6d6d6d]" : "text-black"} ${item.text === "Merge Layers" ? "bg-[#91c9f7]" : ""}`}
            >
              {item.text}
            </button>
          ))}
        </React.Fragment>
      ))}
    </div>
  );
}

export default function App() {
  return (
    <div className="relative flex h-screen flex-col overflow-hidden bg-[#080808] font-['Open_Sans','Noto_Sans',sans-serif] leading-none">
      <TopBar />
      <div className="mt-px flex min-h-0 flex-1 gap-[3px]">
        <ToolColumn />
        <main className="flex min-w-0 flex-1 flex-col">
          <DocumentArea />
          <Timeline />
        </main>
        <Properties />
        <Dock />
      </div>
      <div className="h-[2px] shrink-0 bg-[#d2d0ce]" />
      <ContextMenu />
    </div>
  );
}
